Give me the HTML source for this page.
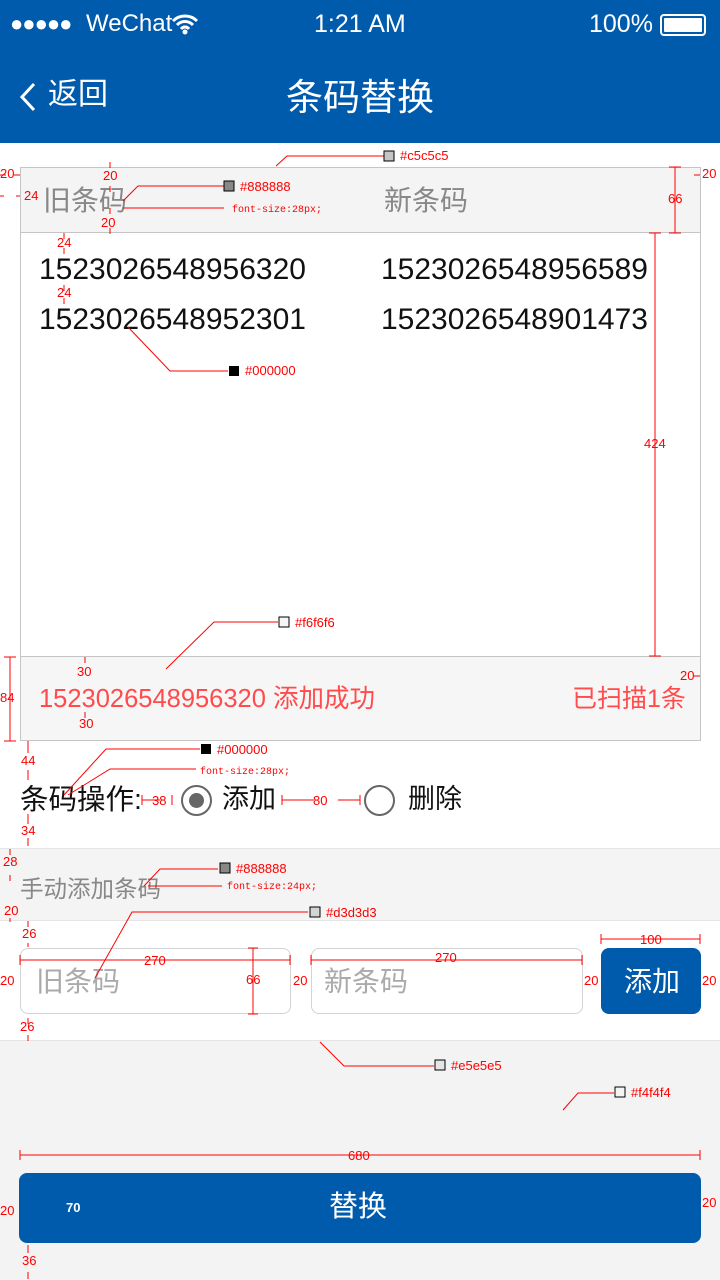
<!DOCTYPE html>
<html><head><meta charset="utf-8"><style>
*{margin:0;padding:0;box-sizing:border-box}
body{width:720px;height:1280px;position:relative;overflow:hidden;background:#f3f3f3;font-family:"Liberation Sans","Noto Sans CJK SC",sans-serif}
.a{position:absolute;white-space:nowrap}
.t{line-height:1}
</style></head><body>
<div class="a" style="left:0;top:0;width:720px;height:143px;background:#005bac"></div>
<div class="a t" style="left:10px;top:13px;color:#fff;font-size:22px;letter-spacing:-1px">●●●●●</div>
<div class="a t" style="left:86px;top:12px;color:#fff;font-size:24px">WeChat</div>
<svg class="a" style="left:171px;top:13px" width="28" height="22" viewBox="0 0 28 22"><path d="M2 8a17 17 0 0 1 24 0M6 12a11 11 0 0 1 16 0M10 16a5 5 0 0 1 8 0" stroke="#fff" stroke-width="3" fill="none"/><circle cx="14" cy="19" r="2.5" fill="#fff"/></svg>
<div class="a t" style="left:314px;top:12px;color:#fff;font-size:25px">1:21 AM</div>
<div class="a t" style="left:589px;top:12px;color:#fff;font-size:25px">100%</div>
<div class="a" style="left:660px;top:14px;width:46px;height:22px;border:2px solid #fff;border-radius:4px;padding:2px"><div style="width:100%;height:100%;background:#fff;border-radius:1px"></div></div>
<svg class="a" style="left:18px;top:82px" width="20" height="30"><path d="M16 2L4 15l12 13" stroke="#fff" stroke-width="3" fill="none"/></svg>
<div class="a t" style="left:48px;top:80px;color:#fff;font-size:30px">返回</div>
<div class="a t" style="left:286px;top:79px;color:#fff;font-size:37px">条码替换</div>

<div class="a" style="left:0;top:143px;width:720px;height:705px;background:#fff"></div>
<div class="a" style="left:20px;top:167px;width:681px;height:574px;border:1px solid #c5c5c5;background:#fff"></div>
<div class="a" style="left:21px;top:168px;width:679px;height:65px;background:#f4f4f4;border-bottom:1px solid #c5c5c5"></div>
<div class="a t" style="left:43px;top:187px;color:#888;font-size:28px">旧条码</div>
<div class="a t" style="left:384px;top:187px;color:#888;font-size:28px">新条码</div>
<div class="a t" style="left:39px;top:255px;color:#111;font-size:30px">1523026548956320</div>
<div class="a t" style="left:381px;top:255px;color:#111;font-size:30px">1523026548956589</div>
<div class="a t" style="left:39px;top:305px;color:#111;font-size:30px">1523026548952301</div>
<div class="a t" style="left:381px;top:305px;color:#111;font-size:30px">1523026548901473</div>
<div class="a" style="left:21px;top:656px;width:679px;height:84px;background:#f6f6f6;border-top:1px solid #c5c5c5"></div>
<div class="a t" style="left:39px;top:687px;color:#ff4b4b;font-size:25.5px">1523026548956320 添加成功</div>
<div class="a t" style="left:572px;top:687px;color:#ff4b4b;font-size:25px">已扫描1条</div>

<div class="a t" style="left:20px;top:786px;color:#111;font-size:28.5px">条码操作:</div>
<div class="a" style="left:181px;top:785px;width:31px;height:31px;border:2px solid #666;border-radius:50%"><div style="margin:6px;width:15px;height:15px;border-radius:50%;background:#666"></div></div>
<div class="a t" style="left:222px;top:786px;color:#111;font-size:27px">添加</div>
<div class="a" style="left:364px;top:785px;width:31px;height:31px;border:2px solid #666;border-radius:50%"></div>
<div class="a t" style="left:408px;top:786px;color:#111;font-size:27px">删除</div>

<div class="a" style="left:0;top:848px;width:720px;height:73px;background:#f4f4f4;border-top:1px solid #e5e5e5;border-bottom:1px solid #e5e5e5"></div>
<div class="a t" style="left:20px;top:878px;color:#888;font-size:23.5px">手动添加条码</div>
<div class="a" style="left:0;top:921px;width:720px;height:120px;background:#fff;border-bottom:1px solid #e5e5e5"></div>
<div class="a" style="left:20px;top:948px;width:271px;height:66px;border:1px solid #d3d3d3;border-radius:8px"></div>
<div class="a t" style="left:36px;top:968px;color:#aaa;font-size:28px">旧条码</div>
<div class="a" style="left:311px;top:948px;width:272px;height:66px;border:1px solid #d3d3d3;border-radius:8px"></div>
<div class="a t" style="left:324px;top:968px;color:#aaa;font-size:28px">新条码</div>
<div class="a" style="left:601px;top:948px;width:100px;height:66px;background:#005bac;border-radius:8px"></div>
<div class="a t" style="left:624px;top:968px;color:#fff;font-size:28px">添加</div>

<div class="a" style="left:19px;top:1173px;width:682px;height:70px;background:#005bac;border-radius:8px"></div>
<div class="a t" style="left:329px;top:1193px;color:#fff;font-size:29px">替换</div>

<svg class="a" style="left:0;top:0" width="720" height="1280" font-family="Liberation Sans,sans-serif" font-size="13" fill="#f00">
<g stroke="#f00" stroke-width="1" fill="none">
<path d="M276 166L287 156H384M110 162v6M110 186v6M110 208v6M110 228v6M123 201L138 186H224M123 208H224M64 233v6M64 248v6M64 285v6M64 298v6M128 327L170 371H228M166 669L214 622H278M655 233V656M649 233h12M649 656h12M675 167v66M669 167h12M669 233h12M10 657v84M4 657h12M4 741h12M85 657v6M85 712v6M28 741v12M28 770v10M28 814v10M28 838v8M64 795L106 749H200M68 795L110 769H196M142 800h18M142 795v10M172 795v10M282 800h32M282 795v10M360 795v10M338 800h22M10 849v6M10 875v6M10 918v4M28 921v6M28 943v4M28 1018v6M28 1035v6M144 886L160 869H218M148 886H222M95 978L132 912H308M20 960H290M20 955v10M290 955v10M253 948v66M248 948h10M248 1014h10M311 960H582M311 955v10M582 955v10M601 939H700M601 934v10M700 934v10M320 1042L344 1066H434M563 1110L578 1093H614M20 1155H700M20 1150v10M700 1150v10M28 1245v8M28 1272v7M0 175h6M14 175h6M0 196h4M16 196h4M694 175h6M694 676h6"/>
</g>
<rect x="384" y="151" width="10" height="10" fill="#c5c5c5" stroke="#000"/><text x="400" y="160">#c5c5c5</text>
<rect x="224" y="181" width="10" height="10" fill="#888" stroke="#000"/><text x="240" y="191">#888888</text>
<text x="232" y="212" font-size="10" font-family="Liberation Mono,monospace">font-size:28px;</text>
<text x="103" y="180">20</text><text x="101" y="227">20</text>
<text x="57" y="247">24</text><text x="57" y="297">24</text>
<text x="0" y="178">20</text><text x="24" y="200">24</text><text x="702" y="178">20</text>
<rect x="229" y="366" width="10" height="10" fill="#000"/><text x="245" y="375">#000000</text>
<rect x="279" y="617" width="10" height="10" fill="#f6f6f6" stroke="#000"/><text x="295" y="627">#f6f6f6</text>
<text x="644" y="448">424</text><text x="668" y="203">66</text>
<text x="0" y="702">84</text><text x="77" y="676">30</text><text x="79" y="728">30</text><text x="680" y="680">20</text>
<rect x="201" y="744" width="10" height="10" fill="#000"/><text x="217" y="754">#000000</text>
<text x="200" y="774" font-size="10" font-family="Liberation Mono,monospace">font-size:28px;</text>
<text x="21" y="765">44</text><text x="21" y="835">34</text><text x="152" y="805">38</text><text x="313" y="805">80</text>
<rect x="220" y="863" width="10" height="10" fill="#888" stroke="#000"/><text x="236" y="873">#888888</text>
<text x="227" y="889" font-size="10" font-family="Liberation Mono,monospace">font-size:24px;</text>
<text x="3" y="866">28</text><text x="4" y="915">20</text>
<rect x="310" y="907" width="10" height="10" fill="#d3d3d3" stroke="#000"/><text x="326" y="917">#d3d3d3</text>
<text x="22" y="938">26</text><text x="20" y="1031">26</text>
<text x="144" y="965" fill="#f00">270</text><text x="246" y="984">66</text><text x="435" y="962">270</text><text x="640" y="944">100</text>
<text x="0" y="985">20</text><text x="293" y="985">20</text><text x="584" y="985">20</text><text x="702" y="985">20</text>
<rect x="435" y="1060" width="10" height="10" fill="#e5e5e5" stroke="#000"/><text x="451" y="1070">#e5e5e5</text>
<rect x="615" y="1087" width="10" height="10" fill="#f4f4f4" stroke="#000"/><text x="631" y="1097">#f4f4f4</text>
<text x="348" y="1160">680</text><text x="66" y="1212" fill="#fff" font-weight="bold">70</text>
<text x="0" y="1215">20</text><text x="702" y="1207">20</text><text x="22" y="1265">36</text>
</svg>
</body></html>
